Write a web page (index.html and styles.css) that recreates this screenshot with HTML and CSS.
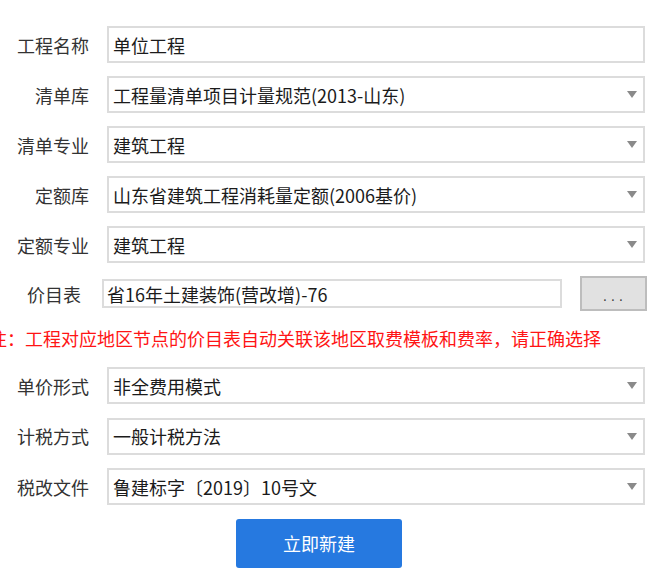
FILE: index.html
```html
<!DOCTYPE html>
<html lang="zh-CN">
<head>
<meta charset="utf-8">
<title>新建工程</title>
<link rel="stylesheet" href="styles.css">
</head>
<body>
<div class="form">
  <div class="row">
    <div class="label">工程名称</div>
    <div class="field">单位工程</div>
  </div>
  <div class="row">
    <div class="label">清单库</div>
    <div class="field select">工程量清单项目计量规范(2013-山东)<span class="arrow"></span></div>
  </div>
  <div class="row">
    <div class="label">清单专业</div>
    <div class="field select">建筑工程<span class="arrow"></span></div>
  </div>
  <div class="row">
    <div class="label">定额库</div>
    <div class="field select">山东省建筑工程消耗量定额(2006基价)<span class="arrow"></span></div>
  </div>
  <div class="row">
    <div class="label">定额专业</div>
    <div class="field select">建筑工程<span class="arrow"></span></div>
  </div>
  <div class="row row-price">
    <div class="label label-price">价目表</div>
    <div class="field field-price">省16年土建装饰(营改增)-76</div>
    <div class="dots-btn">. . .</div>
  </div>
  <div class="note">注：工程对应地区节点的价目表自动关联该地区取费模板和费率，请正确选择</div>
  <div class="row row-lower">
    <div class="label">单价形式</div>
    <div class="field select">非全费用模式<span class="arrow"></span></div>
  </div>
  <div class="row row-lower">
    <div class="label">计税方式</div>
    <div class="field select">一般计税方法<span class="arrow"></span></div>
  </div>
  <div class="row row-lower">
    <div class="label">税改文件</div>
    <div class="field select">鲁建标字〔2019〕10号文<span class="arrow"></span></div>
  </div>
  <div class="actions">
    <div class="primary-btn">立即新建</div>
  </div>
</div>
</body>
</html>
```
FILE: styles.css
```css
html, body {
  margin: 0;
  padding: 0;
  background: #ffffff;
}
body {
  font-family: "Noto Sans CJK SC", "Noto Sans", sans-serif;
  font-size: 18px;
  color: #222;
  overflow: hidden;
}
.form {
  padding-top: 26px;
  width: 661px;
}
.row {
  display: flex;
  align-items: center;
  height: 37px;
  margin-bottom: 13px;
}
.row-lower {
  margin-bottom: 13.5px;
}
.label {
  width: 89px;
  flex: none;
  text-align: right;
  color: #333;
  line-height: 24px;
}
.field {
  box-sizing: border-box;
  margin-left: 18px;
  width: 538px;
  height: 37px;
  border: 2px solid #dcdcdc;
  background: #fff;
  display: flex;
  align-items: center;
  padding-left: 4px;
  color: #1b1b1b;
  white-space: nowrap;
}
.arrow {
  margin-left: auto;
  margin-right: 6px;
  width: 0;
  height: 0;
  border-left: 5.5px solid transparent;
  border-right: 5.5px solid transparent;
  border-top: 7px solid #8a8a8a;
}
.row-price {
  height: 35px;
  margin-top: 2px;
  margin-bottom: 15px;
}
.label-price {
  width: 81px;
}
.field-price {
  margin-left: 21px;
  width: 460px;
  height: 29px;
  padding-left: 3px;
}
.dots-btn {
  box-sizing: border-box;
  margin-left: 18px;
  width: 67px;
  height: 35px;
  background: #e1e1e1;
  border: 2px solid #bdbdbd;
  display: flex;
  align-items: center;
  justify-content: center;
  font-size: 12px;
  letter-spacing: 1px;
  color: #333;
  padding-top: 4px;
}
.note {
  margin-left: -11px;
  color: #ff1414;
  line-height: 24px;
  height: 24px;
  white-space: nowrap;
  margin-bottom: 17px;
}
.actions {
  display: flex;
  padding-left: 236px;
  margin-top: 0.5px;
}
.primary-btn {
  width: 166px;
  height: 49px;
  border-radius: 3px;
  background: #2679e0;
  color: #fff;
  display: flex;
  align-items: center;
  justify-content: center;
}
```
